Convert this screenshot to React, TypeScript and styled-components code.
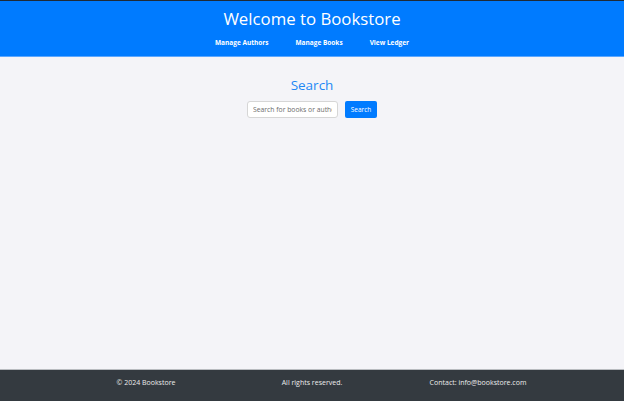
import React from "react";
import styled, { createGlobalStyle } from "styled-components";

const Global = createGlobalStyle`
  html, body { margin: 0; padding: 0; }
  body { font-family: "Open Sans", "Noto Sans", sans-serif; background: #f4f4f8; }
  * { box-sizing: border-box; }
`;

const Page = styled.div`
  min-height: 401px;
  display: flex;
  flex-direction: column;
  border-top: 1px solid #1f2a36;
`;

const Header = styled.header`
  background: #007bff;
  color: #fff;
  text-align: center;
  padding: 6px 0 8px;
  border-bottom: 1px solid #5ba7ff;
`;

const Title = styled.h1`
  margin: 0;
  font-size: 16.8px;
  font-weight: 400;
  line-height: 24px;
`;

const Nav = styled.nav`
  display: flex;
  justify-content: center;
  gap: 27px;
  margin-top: 7px;
`;

const NavLink = styled.a`
  color: #fff;
  font-size: 6.5px;
  font-weight: 700;
  text-decoration: none;
  line-height: 10px;
`;

const Main = styled.main`
  flex: 1;
  display: flex;
  flex-direction: column;
  align-items: center;
  padding-top: 18px;
`;

const SearchTitle = styled.h2`
  margin: 0;
  color: #1e88f5;
  font-size: 13.5px;
  font-weight: 400;
  line-height: 20px;
`;

const SearchRow = styled.div`
  display: flex;
  gap: 7px;
  margin-top: 6px;
`;

const Input = styled.input`
  width: 91px;
  height: 17px;
  border: 1px solid #d6d6d6;
  border-radius: 3px;
  background: #fff;
  font-family: inherit;
  font-size: 6.8px;
  padding: 0 5px;
  outline: none;
  &::placeholder { color: #6c6c6c; }
`;

const Button = styled.button`
  width: 32px;
  height: 17px;
  border: none;
  border-radius: 2px;
  background: #007bff;
  color: #fff;
  font-family: inherit;
  font-size: 6.5px;
  padding: 0;
`;

const Footer = styled.footer`
  background: #343a40;
  border-top: 1px solid #b9bcc0;
  color: #ececec;
  height: 32px;
  padding-top: 8px;
  display: grid;
  grid-template-columns: repeat(3, 166px);
  justify-content: center;
  align-items: start;
  font-size: 7px;
  line-height: 10px;
  text-align: center;
`;

export default function App() {
  return (
    <>
      <Global />
      <Page>
        <Header>
          <Title>Welcome to Bookstore</Title>
          <Nav>
            <NavLink href="#">Manage Authors</NavLink>
            <NavLink href="#">Manage Books</NavLink>
            <NavLink href="#">View Ledger</NavLink>
          </Nav>
        </Header>
        <Main>
          <SearchTitle>Search</SearchTitle>
          <SearchRow>
            <Input placeholder="Search for books or authors" />
            <Button>Search</Button>
          </SearchRow>
        </Main>
        <Footer>
          <span>© 2024 Bookstore</span>
          <span>All rights reserved.</span>
          <span>Contact: info@bookstore.com</span>
        </Footer>
      </Page>
    </>
  );
}
